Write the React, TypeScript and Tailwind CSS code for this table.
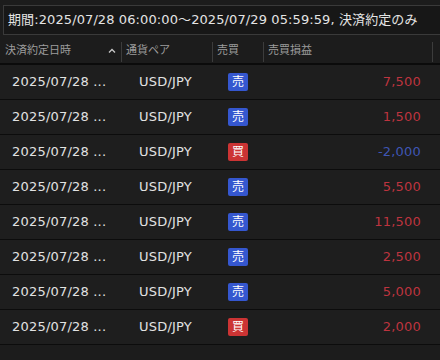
type Trade = { date: string; pair: string; side: 'sell' | 'buy'; profit: number };

const trades: Trade[] = [
  { date: '2025/07/28 ...', pair: 'USD/JPY', side: 'sell', profit: 7500 },
  { date: '2025/07/28 ...', pair: 'USD/JPY', side: 'sell', profit: 1500 },
  { date: '2025/07/28 ...', pair: 'USD/JPY', side: 'buy', profit: -2000 },
  { date: '2025/07/28 ...', pair: 'USD/JPY', side: 'sell', profit: 5500 },
  { date: '2025/07/28 ...', pair: 'USD/JPY', side: 'sell', profit: 11500 },
  { date: '2025/07/28 ...', pair: 'USD/JPY', side: 'sell', profit: 2500 },
  { date: '2025/07/28 ...', pair: 'USD/JPY', side: 'sell', profit: 5000 },
  { date: '2025/07/28 ...', pair: 'USD/JPY', side: 'buy', profit: 2000 },
];

const Sep = () => <div className="h-[20px] w-px shrink-0 bg-[#3c3c3c]" />;

export default function App() {
  return (
    <div className="w-[440px] h-[360px] overflow-hidden bg-[#1c1c1c] font-['DejaVu_Sans','Noto_Sans_CJK_JP',sans-serif]">
      <div className="pt-[5px] pl-[3px]">
        <div className="h-[30px] flex items-center pl-[4px] border border-r-0 border-[#3a3a3a] bg-[#171717] text-[13px] tracking-[0.1px] text-[#e4e4e4] whitespace-nowrap">
          期間:2025/07/28 06:00:00～2025/07/29 05:59:59, 決済約定のみ
        </div>
      </div>

      <div className="mt-[5px] h-[25px] flex items-center border-b-2 border-[#0b0b0b] text-[11px] text-[#9c9c9c] whitespace-nowrap">
        <div className="w-[121px] shrink-0 flex items-center justify-between pl-[5px] pr-[5px]">
          <span>決済約定日時</span>
          <svg width="8" height="5" viewBox="0 0 8 5" className="mb-[2px]">
            <path d="M1 4.5 L4 1.5 L7 4.5" stroke="#c8c8c8" strokeWidth="1.3" fill="none" />
          </svg>
        </div>
        <Sep />
        <div className="w-[90px] shrink-0 pl-[4px]">通貨ペア</div>
        <Sep />
        <div className="w-[50px] shrink-0 pl-[4px]">売買</div>
        <Sep />
        <div className="w-[168px] shrink-0 pl-[4px]">売買損益</div>
        <Sep />
      </div>

      <div>
        {trades.map((t, i) => (
          <div key={i} className="h-[35px] flex items-center border-b border-[#0c0c0c] bg-[#1e1e1e] text-[13px] tracking-[0.2px] whitespace-nowrap">
            <div className="w-[121px] shrink-0 pl-[12px] text-[#e2e2e2]">{t.date}</div>
            <div className="w-[91px] shrink-0 pl-[18px] text-[#e2e2e2]">{t.pair}</div>
            <div className="w-[51px] shrink-0 pl-[16px]">
              <span
                className={`inline-flex items-center justify-center w-[20px] h-[18px] rounded-[2px] text-[12px] leading-none tracking-normal text-white ${
                  t.side === 'sell' ? 'bg-[#3557cf]' : 'bg-[#cc3434]'
                }`}
              >
                {t.side === 'sell' ? '売' : '買'}
              </span>
            </div>
            <div
              className={`w-[169px] shrink-0 pr-[11px] text-right ${
                t.profit < 0 ? 'text-[#3f56b4]' : 'text-[#bd343f]'
              }`}
            >
              {new Intl.NumberFormat('en-US').format(t.profit)}
            </div>
          </div>
        ))}
      </div>
    </div>
  );
}
